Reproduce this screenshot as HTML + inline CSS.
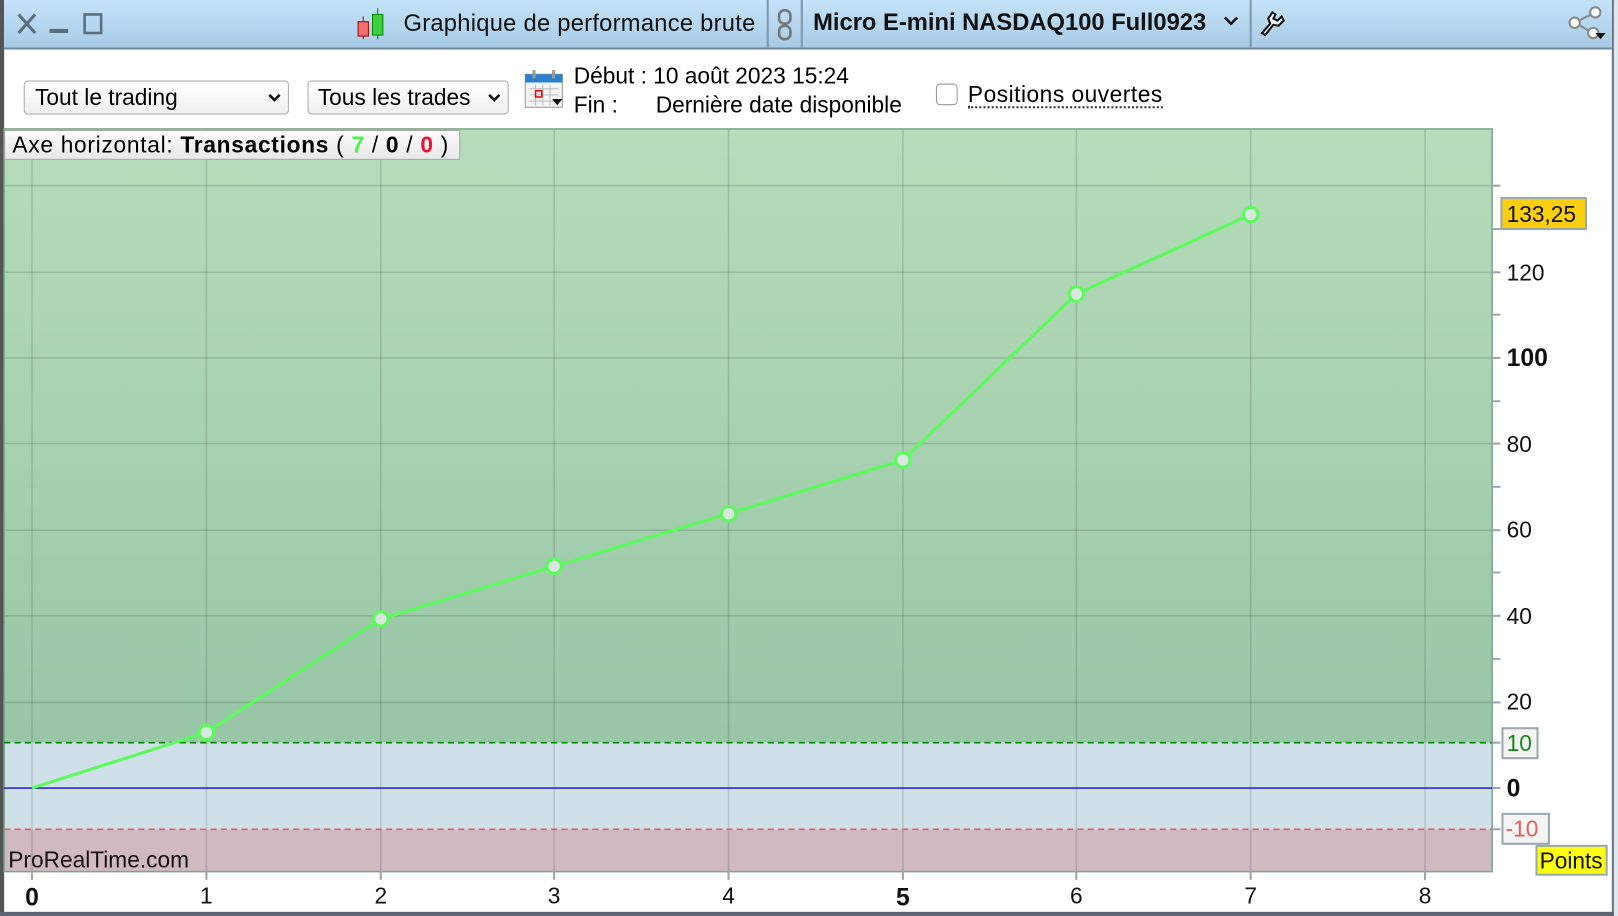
<!DOCTYPE html>
<html><head><meta charset="utf-8"><style>
body{margin:0;width:1618px;height:916px;overflow:hidden;background:#fff;font-family:"Liberation Sans","DejaVu Sans",sans-serif}
#w{position:absolute;left:0;top:0;width:1568px;height:888px;transform:scale(1.0319,1.0315);transform-origin:0 0}
.t{position:absolute;white-space:nowrap}
</style></head><body><div id="w">
<div style="position:absolute;left:0;top:0;width:4px;height:888px;background:#555"></div>
<div style="position:absolute;left:1562px;top:0;width:6px;height:888px;background:#dfe8ef"></div>
<div style="position:absolute;left:1562px;top:0;width:2px;height:888px;background:#6a7580"></div>
<div style="position:absolute;left:0;top:884px;width:1564px;height:4px;background:#5d6670"></div>
<div style="position:absolute;left:4px;top:0;width:1558px;height:46px;background:linear-gradient(#c4e3fa,#a8cbe6);border-bottom:2px solid #6f8aa0"></div>
<svg class="t" style="left:14px;top:10px" width="90" height="26">
<path d="M4 4 L20 22 M20 4 L4 22" stroke="#5b6e7d" stroke-width="3"/>
<rect x="34" y="18" width="18" height="4" fill="#5b6e7d"/>
<rect x="68" y="4" width="16" height="18" fill="none" stroke="#5b6e7d" stroke-width="2.5"/>
</svg>
<svg class="t" style="left:344px;top:6px" width="34" height="34">
<line x1="8" y1="10" x2="8" y2="32" stroke="#a00"/><rect x="3" y="15" width="10" height="14" fill="#f07070" stroke="#a00"/>
<line x1="22" y1="2" x2="22" y2="32" stroke="#080"/><rect x="17" y="8" width="10" height="20" fill="#3ecf3e" stroke="#080"/>
</svg>
<div class="t" style="left:391px;top:9px;font-size:23px;color:#111;letter-spacing:0.25px">Graphique de performance brute</div>
<div style="position:absolute;left:743px;top:0;width:2px;height:46px;background:#7e97ab"></div>
<svg class="t" style="left:752px;top:8px" width="18" height="32"><rect x="3" y="2" width="11" height="13" rx="5" fill="none" stroke="#777" stroke-width="2.5"/><rect x="3" y="17" width="11" height="13" rx="5" fill="none" stroke="#777" stroke-width="2.5"/></svg>
<div style="position:absolute;left:776px;top:0;width:2px;height:46px;background:#7e97ab"></div>
<div class="t" style="left:788px;top:8px;font-size:23px;font-weight:bold;color:#111">Micro E-mini NASDAQ100 Full0923</div>
<svg class="t" style="left:1185px;top:14px" width="16" height="12"><path d="M2 3 L8 9 L14 3" fill="none" stroke="#111" stroke-width="2.5"/></svg>
<div style="position:absolute;left:1211px;top:0;width:2px;height:46px;background:#7e97ab"></div>
<svg class="t" style="left:1219px;top:8px" width="28" height="28"><path d="M4 24 L12 15 L10 10 L14 4 L17 6 L15 10 L19 12 L23 8 L25 12 L20 17 L15 16 L7 26 Z" fill="#fff" stroke="#111" stroke-width="2"/></svg>
<svg class="t" style="left:1518px;top:4px" width="42" height="36"><circle cx="28" cy="8" r="5" fill="#fff" stroke="#888" stroke-width="2"/><circle cx="8" cy="18" r="5" fill="#fff" stroke="#888" stroke-width="2"/><circle cx="26" cy="28" r="5" fill="#fff" stroke="#888" stroke-width="2"/><path d="M12 16 L24 10 M12 20 L22 26" stroke="#888" stroke-width="2"/><path d="M28 28 L38 28 L33 34 Z" fill="#111"/></svg>
<div class="t" style="left:23px;top:78px;width:257px;height:33px;border:1px solid #aaa;border-radius:4px;background:linear-gradient(#fff,#f0f0f0);box-sizing:border-box;font-size:22px;line-height:31px;padding-left:10px">Tout le trading<svg style="position:absolute;right:6px;top:11px" width="14" height="10"><path d="M2 2 L7 7 L12 2" fill="none" stroke="#111" stroke-width="2.5"/></svg></div>
<div class="t" style="left:298px;top:78px;width:195px;height:33px;border:1px solid #aaa;border-radius:4px;background:linear-gradient(#fff,#f0f0f0);box-sizing:border-box;font-size:22px;line-height:31px;padding-left:9px">Tous les trades<svg style="position:absolute;right:6px;top:11px" width="14" height="10"><path d="M2 2 L7 7 L12 2" fill="none" stroke="#111" stroke-width="2.5"/></svg></div>
<svg class="t" style="left:507px;top:66px" width="42" height="40"><rect x="2" y="6" width="36" height="32" fill="#f4f4f4" stroke="#999"/><rect x="2" y="6" width="36" height="8" fill="#2b7fcf"/><rect x="9" y="2" width="3" height="8" fill="#999"/><rect x="28" y="2" width="3" height="8" fill="#999"/><path d="M6 20 H34 M6 26 H34 M6 32 H34 M12 16 V36 M19 16 V36 M26 16 V36" stroke="#bbb"/><rect x="12" y="22" width="6" height="6" fill="none" stroke="#e00" stroke-width="1.5"/><path d="M28 30 L38 30 L33 36 Z" fill="#111"/></svg>
<div class="t" style="left:556px;top:61px;font-size:22px">Début : 10 août 2023 15:24</div>
<div class="t" style="left:556px;top:89px;font-size:22px">Fin :&nbsp;&nbsp;&nbsp;&nbsp;&nbsp;&nbsp;Dernière date disponible</div>
<div class="t" style="left:907px;top:81px;width:21px;height:21px;border:1px solid #999;border-radius:4px;box-sizing:border-box"></div>
<div class="t" style="left:938px;top:81px;font-size:22px;border-bottom:2px dotted #333;line-height:22px;letter-spacing:0.5px">Positions ouvertes</div>
<svg class="t" style="left:0;top:0" width="1562" height="884">
<defs><linearGradient id="g" x1="0" y1="0" x2="0" y2="1"><stop offset="0" stop-color="#b6dcba"/><stop offset="1" stop-color="#98c6a6"/></linearGradient></defs>
<rect x="4" y="125" width="1442" height="595" fill="url(#g)"/>
<rect x="4" y="720" width="1442" height="84" fill="#d0e0e8"/>
<rect x="4" y="804" width="1442" height="41" fill="#d0b9c0"/>
<g stroke="#000" stroke-opacity="0.13" stroke-width="1.5">
<path d="M4 180H1446M4 264H1446M4 347H1446M4 430H1446M4 514H1446M4 597H1446M4 681H1446"/>
<path d="M31 125V845M200 125V845M369 125V845M537 125V845M706 125V845M875 125V845M1043 125V845M1212 125V845M1381 125V845"/>
</g>
<rect x="4" y="125" width="1442" height="720" fill="none" stroke="#7aa88a" stroke-width="1.5"/>
<line x1="4" y1="720" x2="1446" y2="720" stroke="#080" stroke-width="1.5" stroke-dasharray="6,4"/>
<line x1="4" y1="804" x2="1446" y2="804" stroke="#e06060" stroke-width="1.5" stroke-dasharray="6,4"/>
<line x1="4" y1="764" x2="1446" y2="764" stroke="#2a2ad8" stroke-width="1.5"/>
<g stroke="#9aa8b0" stroke-width="2"><path d="M1446 180h8M1446 222h8M1446 264h8M1446 305h8M1446 347h8M1446 389h8M1446 430h8M1446 472h8M1446 514h8M1446 555h8M1446 597h8M1446 639h8M1446 681h8M1446 720h8M1446 764h8M1446 804h8"/>
<path d="M31 845v8M200 845v8M369 845v8M537 845v8M706 845v8M875 845v8M1043 845v8M1212 845v8M1381 845v8"/></g>
<polyline points="31,764 200,710 369,600 537,549 706,498 875,446 1043,285 1212,208" fill="none" stroke="#5cfa5c" stroke-width="3"/>
<g fill="#d8e8e0" stroke="#5cfa5c" stroke-width="3">
<circle cx="200" cy="710" r="7"/><circle cx="369" cy="600" r="7"/><circle cx="537" cy="549" r="7"/><circle cx="706" cy="498" r="7"/><circle cx="875" cy="446" r="7"/><circle cx="1043" cy="285" r="7"/><circle cx="1212" cy="208" r="7"/></g>
<g font-family="Liberation Sans, sans-serif" font-size="22" fill="#111">
<text x="1460" y="272">120</text><text x="1460" y="355" font-weight="bold" font-size="24">100</text>
<text x="1460" y="438">80</text><text x="1460" y="521">60</text><text x="1460" y="605">40</text><text x="1460" y="688">20</text>
<text x="1460" y="772" font-weight="bold" font-size="24">0</text>
<g text-anchor="middle"><text x="31" y="878" font-weight="bold" font-size="24">0</text><text x="200" y="876">1</text><text x="369" y="876">2</text><text x="537" y="876">3</text><text x="706" y="876">4</text><text x="875" y="878" font-weight="bold" font-size="24">5</text><text x="1043" y="876">6</text><text x="1212" y="876">7</text><text x="1381" y="876">8</text></g>
<text x="8" y="841">ProRealTime.com</text>
</g>
<rect x="1455" y="192" width="82" height="30" fill="#fbcf10" stroke="#9aa8b0" stroke-width="2"/>
<text x="1460" y="215" font-family="Liberation Sans, sans-serif" font-size="22" fill="#111">133,25</text>
<rect x="1456" y="706" width="34" height="29" fill="#f4f4f4" stroke="#9aa8b0" stroke-width="2"/>
<text x="1460" y="728" font-family="Liberation Sans, sans-serif" font-size="22" fill="#1a8a1a">10</text>
<rect x="1456" y="789" width="45" height="29" fill="#f4f4f4" stroke="#9aa8b0" stroke-width="2"/>
<text x="1459" y="811" font-family="Liberation Sans, sans-serif" font-size="22" fill="#e06060">-10</text>
<rect x="1489" y="820" width="68" height="28" fill="#ffff10" stroke="#9aa8b0" stroke-width="2"/>
<text x="1492" y="842" font-family="Liberation Sans, sans-serif" font-size="22" fill="#111">Points</text>
</svg>
<div class="t" style="left:4px;top:126px;height:27px;padding:0 10px 0 7px;background:linear-gradient(#fbfbfb,#e8e8e8);border:1px solid #aaa;font-size:22px;line-height:27px;letter-spacing:0.7px">Axe horizontal: <b>Transactions</b> ( <b style="color:#4ef24e">7</b> / <b>0</b> / <b style="color:#f01030">0</b> )</div>
</div></body></html>
